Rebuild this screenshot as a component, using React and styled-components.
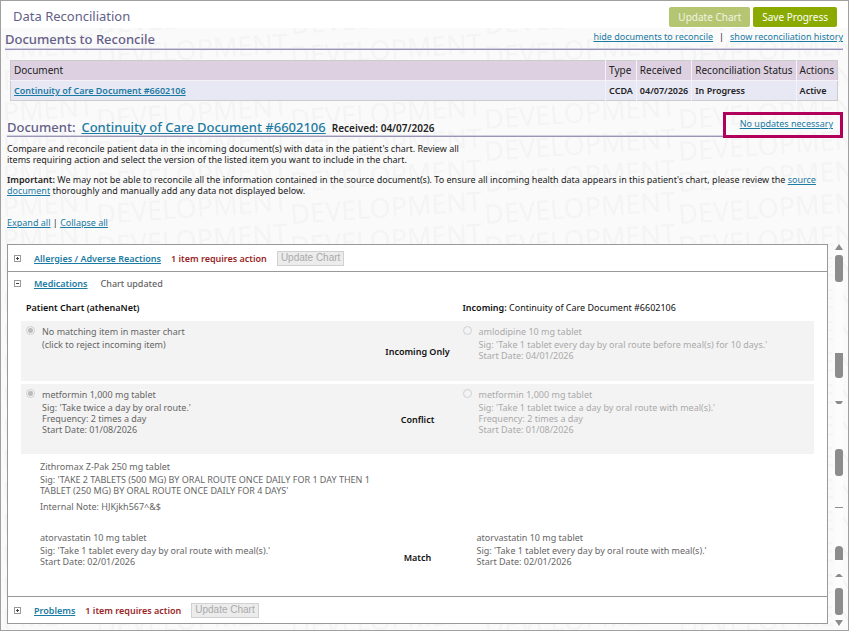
import styled, { createGlobalStyle } from "styled-components";

const watermarkRows = [0, 32, 63, 95, 127];

const documents = [
   {
      name: "Continuity of Care Document #6602106",
      type: "CCDA",
      received: "04/07/2026",
      status: "In Progress",
      action: "Active",
   },
];

const choices = [
   {
      id: "amlodipine",
      status: "Incoming Only",
      height: 60,
      chart: {
         name: "No matching item in master chart",
         lines: ["(click to reject incoming item)"],
      },
      incoming: {
         name: "amlodipine 10 mg tablet",
         lines: [
            "Sig: 'Take 1 tablet every day by oral route before meal(s) for 10 days.'",
            "Start Date: 04/01/2026",
         ],
      },
   },
   {
      id: "metformin",
      status: "Conflict",
      height: 70,
      chart: {
         name: "metformin 1,000 mg tablet",
         lines: [
            "Sig: 'Take twice a day by oral route.'",
            "Frequency: 2 times a day",
            "Start Date: 01/08/2026",
         ],
      },
      incoming: {
         name: "metformin 1,000 mg tablet",
         lines: [
            "Sig: 'Take 1 tablet twice a day by oral route with meal(s).'",
            "Frequency: 2 times a day",
            "Start Date: 01/08/2026",
         ],
      },
   },
];

const matched = {
   name: "atorvastatin 10 mg tablet",
   lines: [
      "Sig: 'Take 1 tablet every day by oral route with meal(s).'",
      "Start Date: 02/01/2026",
   ],
};

const Watermark = () => (
   <WatermarkLayer aria-hidden="true">
      <defs>
         <pattern
            id="development"
            width="194"
            height="95"
            patternUnits="userSpaceOnUse"
            patternTransform="translate(96 6)"
         >
            {watermarkRows.map((y) => (
               <text key={y} transform={`translate(0 ${y}) rotate(-4)`}>
                  DEVELOPMENT
               </text>
            ))}
         </pattern>
      </defs>
      <rect width="100%" height="100%" fill="url(#development)" />
   </WatermarkLayer>
);

const Toggle = ({ open, label }) => (
   <ToggleButton type="button" aria-label={label} aria-expanded={open}>
      <svg width="7" height="7" viewBox="0 0 7 7" shapeRendering="crispEdges">
         <rect x="0.5" y="0.5" width="6" height="6" fill="#fff" stroke="#999" />
         <path d="M2 3.5h3" stroke="#444" />
         {!open && <path d="M3.5 2v3" stroke="#444" />}
      </svg>
   </ToggleButton>
);

const ScrollRail = () => (
   <Rail viewBox="0 0 8 382" width="8" height="382" aria-hidden="true">
      <path d="M4 0L8 6H0Z" />
      <rect y="11" width="8" height="27" rx="3" />
      <path d="M0 109h8v22a3 3 0 0 1-3 3h-2a3 3 0 0 1-3-3z" />
      <path d="M0 157h8l-2 3h-4z" />
      <rect y="205" width="8" height="27" rx="3" />
      <rect y="263" width="8" height="1" />
      <path d="M0 316v-10a4 4 0 0 1 8 0v10z" />
      <path d="M0 333l3-3h2l3 3z" />
      <rect y="344" width="8" height="27" rx="3" />
      <path d="M0 376h8L4 382Z" />
   </Rail>
);

const Details = ({ item }) => (
   <>
      <ItemName>{item.name}</ItemName>
      {item.lines.map((line) => (
         <ItemLine key={line}>{line}</ItemLine>
      ))}
   </>
);

const Option = ({ group, side, item, muted, selected }) => (
   <OptionCell $muted={muted}>
      <Radio
         type="radio"
         id={`${group}-${side}`}
         name={group}
         defaultChecked={selected}
         disabled
      />
      <label htmlFor={`${group}-${side}`}>
         <Details item={item} />
      </label>
   </OptionCell>
);

const App = () => (
   <>
      <GlobalStyle />
      <Page>
         <TopBar>
            <PageTitle>Data Reconciliation</PageTitle>
            <TopButton type="button" disabled>
               Update Chart
            </TopButton>
            <TopButton type="button">Save Progress</TopButton>
         </TopBar>

         <Content>
            <Watermark />
            <SectionBar>
               <Heading>Documents to Reconcile</Heading>
               <nav>
                  <Link href="#hide">hide documents to reconcile</Link>
                  <Divider>|</Divider>
                  <Link href="#history">show reconciliation history</Link>
               </nav>
            </SectionBar>

            <DocumentTable>
               <thead>
                  <tr>
                     <th>Document</th>
                     <th>Type</th>
                     <th>Received</th>
                     <th>Reconciliation Status</th>
                     <th>Actions</th>
                  </tr>
               </thead>
               <tbody>
                  {documents.map((doc) => (
                     <tr key={doc.name}>
                        <td>
                           <Link href="#document">{doc.name}</Link>
                        </td>
                        <td>{doc.type}</td>
                        <td>{doc.received}</td>
                        <td>{doc.status}</td>
                        <td>{doc.action}</td>
                     </tr>
                  ))}
               </tbody>
            </DocumentTable>

            <DocumentBar>
               <Heading>Document:</Heading>
               <DocumentLink href="#document">
                  Continuity of Care Document #6602106
               </DocumentLink>
               <Received>Received: 04/07/2026</Received>
               <Highlight>
                  <Link href="#none">No updates necessary</Link>
               </Highlight>
            </DocumentBar>

            <Intro>
               <p>
                  Compare and reconcile patient data in the incoming document(s)
                  with data in the patient's chart. Review all
                  <br />
                  items requiring action and select the version of the listed
                  item you want to include in the chart.
               </p>
               <p>
                  <b>Important:</b> We may not be able to reconcile all the
                  information contained in the source document(s). To ensure all
                  incoming health data appears in this patient's chart, please
                  review the <Link href="#source">source document</Link>{" "}
                  thoroughly and manually add any data not displayed below.
               </p>
            </Intro>

            <ExpandLinks>
               <Link href="#expand">Expand all</Link> |{" "}
               <Link href="#collapse">Collapse all</Link>
            </ExpandLinks>

            <Workspace>
               <Panel>
                  <SectionRow>
                     <Toggle label="Expand allergies" open={false} />
                     <SectionLink href="#allergies">
                        Allergies / Adverse Reactions
                     </SectionLink>
                     <Alert>1 item requires action</Alert>
                     <SmallButton type="button" disabled>
                        Update Chart
                     </SmallButton>
                  </SectionRow>

                  <Medications>
                     <SectionRow $compact>
                        <Toggle label="Collapse medications" open />
                        <SectionLink href="#medications">Medications</SectionLink>
                        <Updated>Chart updated</Updated>
                     </SectionRow>

                     <ColumnTitles>
                        <b>Patient Chart (athenaNet)</b>
                        <span />
                        <span>
                           <b>Incoming:</b> Continuity of Care Document #6602106
                        </span>
                     </ColumnTitles>

                     {choices.map((row) => (
                        <Band key={row.id} $height={row.height}>
                           <Option
                              group={row.id}
                              side="chart"
                              item={row.chart}
                              selected
                           />
                           <Status>{row.status}</Status>
                           <Option
                              group={row.id}
                              side="incoming"
                              item={row.incoming}
                              muted
                           />
                        </Band>
                     ))}

                     <Matched $height={71}>
                        <PlainCell>
                           <ItemName>Zithromax Z-Pak 250 mg tablet</ItemName>
                           <ItemLine>
                              Sig: 'TAKE 2 TABLETS (500 MG) BY ORAL ROUTE ONCE
                              DAILY FOR 1 DAY THEN 1
                           </ItemLine>
                           <ItemLine>
                              TABLET (250 MG) BY ORAL ROUTE ONCE DAILY FOR 4
                              DAYS'
                           </ItemLine>
                           <Note>Internal Note: HJKjkh567^&amp;$</Note>
                        </PlainCell>
                     </Matched>
                     <Matched $height={58}>
                        <PlainCell>
                           <Details item={matched} />
                        </PlainCell>
                        <Status>Match</Status>
                        <PlainCell>
                           <Details item={matched} />
                        </PlainCell>
                     </Matched>
                  </Medications>

                  <SectionRow>
                     <Toggle label="Expand problems" open={false} />
                     <SectionLink href="#problems">Problems</SectionLink>
                     <Alert>1 item requires action</Alert>
                     <SmallButton type="button" disabled>
                        Update Chart
                     </SmallButton>
                  </SectionRow>
               </Panel>
               <ScrollRail />
            </Workspace>
         </Content>
      </Page>
   </>
);

export default App;

const GlobalStyle = createGlobalStyle`
   * {
      box-sizing: border-box;
   }

   body {
      margin: 0;
      background: #fff;
      color: #222;
      font-family: "Noto Sans", "Open Sans", sans-serif;
      font-size: 9px;
      line-height: 11px;
   }

   b {
      font-weight: 600;
   }
`;

const Page = styled.div`
   display: flex;
   flex-direction: column;
   min-height: 100vh;
   border: 1px solid #a0a0a0;
`;

const TopBar = styled.header`
   display: flex;
   align-items: center;
   gap: 3px;
   height: 27px;
   padding: 4px 11px 0 12px;
`;

const PageTitle = styled.h1`
   flex: 1;
   margin: 0;
   color: #645f88;
   font-size: 13px;
   font-weight: 400;
   line-height: 20px;
   padding-bottom: 2px;
`;

const TopButton = styled.button`
   height: 20px;
   padding: 0 9px;
   border: none;
   border-radius: 2px;
   background: #8aaa00;
   color: #fff;
   font-family: inherit;
   font-size: 10px;
   line-height: 18px;

   &:disabled {
      background: #b5c673;
      color: #f1f4e2;
   }
`;

const Content = styled.main`
   position: relative;
   isolation: isolate;
   flex: 1;
   padding: 0 5px 4px 4px;
   background: #fafafa;
`;

const WatermarkLayer = styled.svg`
   position: absolute;
   inset: 0;
   z-index: -1;
   width: 100%;
   height: 100%;
   fill: #f4f4f4;
   font-family: "Noto Sans", sans-serif;
   font-size: 27px;
`;

const SectionBar = styled.div`
   display: flex;
   justify-content: space-between;
   height: 22px;
   border-bottom: 1px solid #9a94b8;
   box-shadow: inset 0 -1px #d2cfe0;
   line-height: 18px;
`;

const Heading = styled.h2`
   margin: 0;
   color: #645f88;
   font-size: 13px;
   font-weight: 500;
   line-height: 22px;
`;

const Link = styled.a`
   color: #1b7ba3;
   text-decoration: underline;
`;

const Divider = styled.span`
   margin: 0 6px;
`;

const DocumentTable = styled.table`
   width: calc(100% - 10px);
   margin: 10px 5px 0;
   border: 1px solid #ccc;
   border-collapse: collapse;
   color: #222;

   th,
   td {
      height: 20px;
      padding: 0 3px;
      border-left: 1px solid #f5f1f7;
      text-align: left;
      white-space: nowrap;
   }

   th {
      border-bottom: 1px solid #f5f1f7;
      background: #ddd1e1;
      font-size: 10px;
      font-weight: 400;
   }

   td {
      background: #e8e8f5;
      font-weight: 600;
   }

   th:first-child,
   td:first-child {
      width: 100%;
      border-left: none;
   }
`;

const DocumentBar = styled.div`
   position: relative;
   display: flex;
   align-items: baseline;
   gap: 6px;
   height: 21px;
   margin: 15px 0 0 2px;
   border-bottom: 1px solid #9a94b8;
   box-shadow: inset 0 -1px #d2cfe0;
`;

const DocumentLink = styled(Link)`
   font-size: 13px;
   font-weight: 500;
   line-height: 22px;
`;

const Received = styled.b`
   font-size: 10px;
`;

const Highlight = styled.div`
   position: absolute;
   right: 0;
   bottom: -2px;
   height: 26px;
   padding: 3px 7px 0 14px;
   border: 3px solid #b0005c;
`;

const Intro = styled.div`
   margin: 6px 26px 0 2px;

   p {
      margin: 0 0 9px;
   }
`;

const ExpandLinks = styled.div`
   margin: 21px 0 0 2px;
`;

const Workspace = styled.div`
   display: flex;
   align-items: flex-start;
   gap: 7px;
   margin: 16px 0 0 2px;
`;

const Panel = styled.div`
   flex: 1;
   border: 1px solid #999;
   background: #fff;
`;

const Rail = styled.svg`
   flex: none;
   background: #fcfcfc;
   fill: #8c8c8c;
`;

const SectionRow = styled.div`
   display: flex;
   align-items: center;
   height: ${({ $compact }) => ($compact ? 23 : 26)}px;
   padding-left: 5px;
`;

const Medications = styled.section`
   padding-bottom: 10px;
   border: solid #999;
   border-width: 1px 0;
`;

const ToggleButton = styled.button`
   display: flex;
   margin-right: 12px;
   padding: 1px;
   border: none;
   background: none;
`;

const SectionLink = styled(Link)`
   font-weight: 600;
`;

const Alert = styled.b`
   margin: 0 10px;
   color: #991f1f;
`;

const Updated = styled.b`
   margin-left: 13px;
   color: #666;
   font-weight: 500;
`;

const SmallButton = styled.button`
   height: 15px;
   padding: 0 3px;
   border: 1px solid #d0d0d0;
   background: #ececec;
   color: #aaa;
   font-family: "Liberation Sans", Arial, sans-serif;
   font-size: 10px;
   line-height: 12px;
`;

const Columns = styled.div`
   display: grid;
   grid-template-columns: 1fr 80px 1fr;
   margin: 0 13px;
`;

const ColumnTitles = styled(Columns)`
   align-items: center;
   height: 26px;
   padding-bottom: 2px;
   color: #111;

   > * {
      padding-left: 5px;
   }
`;

const Band = styled(Columns)`
   min-height: ${({ $height }) => $height}px;
   margin-bottom: 3px;
   background: #f3f3f3;
`;

const Matched = styled(Columns)`
   min-height: ${({ $height }) => $height}px;
`;

const OptionCell = styled.div`
   display: flex;
   align-items: flex-start;
   gap: 7px;
   padding: 5px 0 0 5px;
   color: ${({ $muted }) => ($muted ? "#aaa" : "#666")};
`;

const PlainCell = styled.div`
   padding: 4px 0 0 19px;
   color: #666;
`;

const Radio = styled.input`
   appearance: none;
   flex: none;
   width: 9px;
   height: 9px;
   margin: 0;
   border: 1px solid #d0d0d0;
   border-radius: 50%;

   &:checked {
      background: radial-gradient(#bbb 0 2px, transparent 3px);
   }
`;

const Status = styled.b`
   align-self: center;
   color: #111;
   text-align: center;
`;

const ItemName = styled.span`
   display: block;
   margin-bottom: 2px;
`;

const ItemLine = styled.span`
   display: block;
   white-space: nowrap;
`;

const Note = styled(ItemLine)`
   margin-top: 5px;
`;
